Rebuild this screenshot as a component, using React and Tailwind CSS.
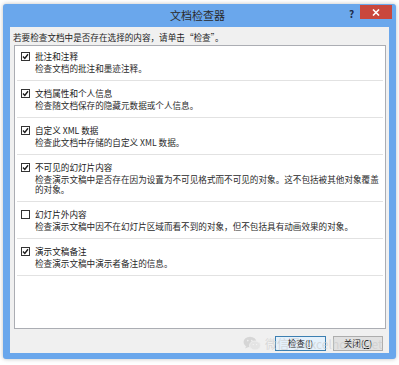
const ITEMS = [
  { label: '批注和注释', desc: '检查文档的批注和墨迹注释。', checked: true },
  { label: '文档属性和个人信息', desc: '检查随文档保存的隐藏元数据或个人信息。', checked: true },
  { label: '自定义 XML 数据', desc: '检查此文档中存储的自定义 XML 数据。', checked: true },
  {
    label: '不可见的幻灯片内容',
    desc: '检查演示文稿中是否存在因为设置为不可见格式而不可见的对象。这不包括被其他对象覆盖的对象。',
    checked: true,
  },
  { label: '幻灯片外内容', desc: '检查演示文稿中因不在幻灯片区域而看不到的对象，但不包括具有动画效果的对象。', checked: false },
  { label: '演示文稿备注', desc: '检查演示文稿中演示者备注的信息。', checked: true },
]

function CheckBox({ checked }) {
  return (
    <span className="w-[9px] h-[9px] border border-[#333] bg-white flex items-center justify-center shrink-0">
      {checked && (
        <svg width="7" height="7" viewBox="0 0 7 7">
          <path d="M1 3.6 L2.8 5.4 L6 1.3" fill="none" stroke="#1a1a1a" strokeWidth="1.4" />
        </svg>
      )}
    </span>
  )
}

function WeChatIcon() {
  return (
    <svg width="18" height="15" viewBox="0 0 18 15" fill="#d6d6d6">
      <ellipse cx="7" cy="6" rx="6.5" ry="5.3" />
      <path d="M3 10 L2.2 12.6 L5.5 11 Z" />
      <ellipse cx="12" cy="9.5" rx="5.5" ry="4.5" fill="#e4e4e4" stroke="#f0f0f0" strokeWidth="0.8" />
      <circle cx="4.8" cy="4.6" r="0.8" fill="#f0f0f0" />
      <circle cx="8.8" cy="4.6" r="0.8" fill="#f0f0f0" />
      <circle cx="10.3" cy="8.6" r="0.6" fill="#f6f6f6" />
      <circle cx="13.6" cy="8.6" r="0.6" fill="#f6f6f6" />
    </svg>
  )
}

export default function App() {
  return (
    <div
      className="w-[399px] h-[365px] bg-white relative overflow-hidden text-[#1e1e1e]"
      style={{ fontFamily: '"Noto Sans CJK SC", "Liberation Sans", sans-serif' }}
    >
      <div className="ml-[3px] mt-[4px] w-[393px] h-[355px] bg-[#6aa7ec] rounded-[3px] flex flex-col shadow-[0_0_4px_rgba(0,0,0,0.25)]">

        {/* Title bar */}
        <div className="h-[23px] flex items-start pr-[4px]">
          <div className="w-[49px]" />
          <div className="flex-1 text-center text-[11px] leading-[23px] text-[#2a2a2a]">文档检查器</div>
          <div className="w-[49px] flex items-start">
            <span className="w-[17px] text-center text-[10px] font-bold leading-[17px] text-[#1c2a48] mt-[1px]">?</span>
            <span className="w-[32px] h-[14px] mt-[1px] bg-[#c9473d] flex items-center justify-center">
              <svg width="8" height="7" viewBox="0 0 8 7">
                <path d="M1 0.5 L7 6.5 M7 0.5 L1 6.5" stroke="white" strokeWidth="1.6" />
              </svg>
            </span>
          </div>
        </div>

        {/* Body */}
        <div className="flex-1 mx-[7px] mb-[6px] bg-[#f0f0f0] flex flex-col pl-[4px] pr-[3px]">
          <p className="h-[18px] -ml-[1px] text-[8.6px] leading-[18px] pt-[1px]">
            若要检查文档中是否存在选择的内容，请单击“检查”。
          </p>

          <div className="h-[284px] bg-white border border-[#abadb3] flex flex-col">
            {ITEMS.map((item, i) => (
              <div
                key={item.label}
                className={`mx-[2px] border-b border-[#e2e2e2] pl-[4px] pr-[2px] pb-[7px] ${i === 0 ? 'pt-[4px]' : 'pt-[6px]'}`}
              >
                <div className="flex items-center h-[12px] gap-[5px]">
                  <CheckBox checked={item.checked} />
                  <span className="text-[8.6px] leading-[12px] text-[#1a1a1a]">{item.label}</span>
                </div>
                <p className="mt-[1px] pl-[14px] text-[8.6px] leading-[10px] text-[#2a2a2a]">{item.desc}</p>
              </div>
            ))}
          </div>

          <div className="flex justify-end gap-[7px] pt-[7px] pr-[3px]">
            <button className="w-[51px] h-[15px] border border-[#3c7fb1] bg-[#e5f1fb] text-[8.6px] leading-[13px] text-[#1a1a1a]">
              检查(<span className="underline">I</span>)
            </button>
            <button className="w-[50px] h-[15px] border border-[#adadad] bg-[#e1e1e1] text-[8.6px] leading-[13px] text-[#1a1a1a]">
              关闭(<span className="underline">C</span>)
            </button>
          </div>
        </div>
      </div>

      {/* watermark */}
      <div className="absolute left-[243px] top-[336px] flex items-center gap-[4px] pointer-events-none whitespace-nowrap">
        <WeChatIcon />
        <span className="text-[12px] leading-[15px] text-[#c8c8c8]/60">微信号 excelhomenet</span>
      </div>
    </div>
  )
}
